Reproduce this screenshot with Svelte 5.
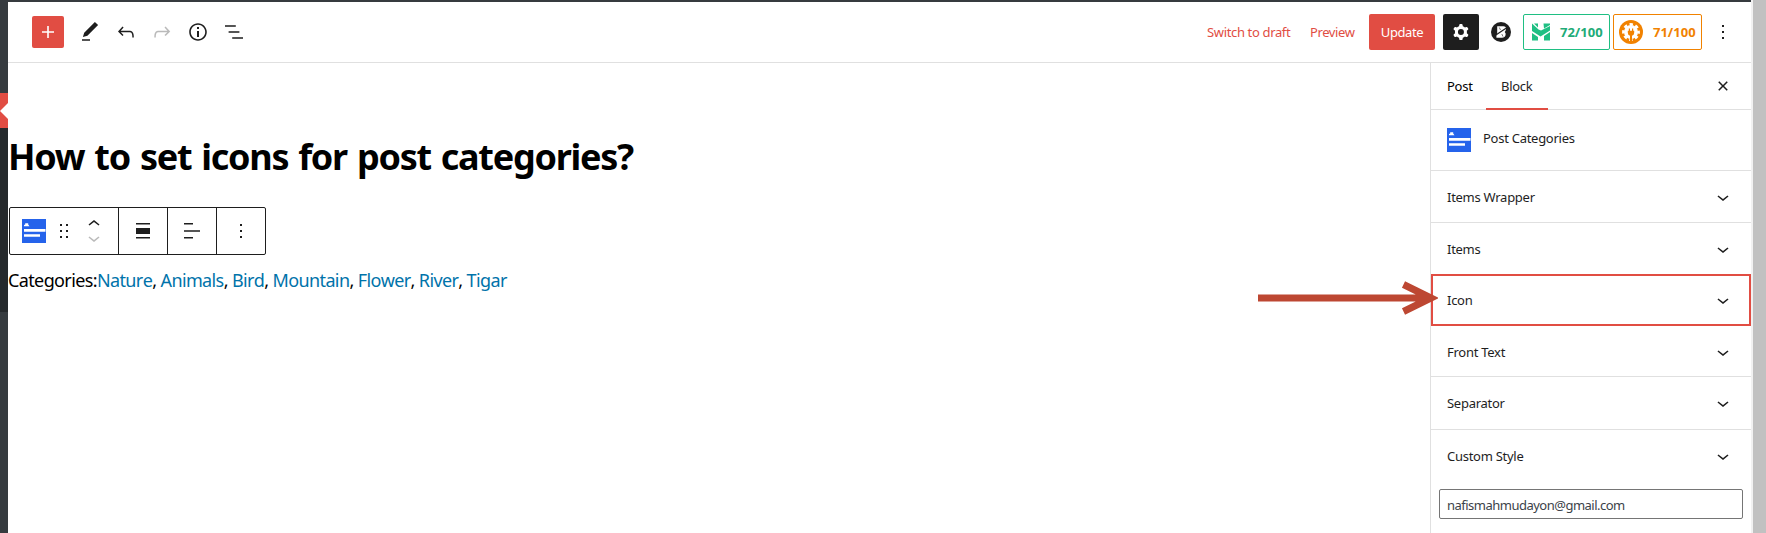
<script>
  const icons = {
    plus: 'M18 11.2h-5.2V6h-1.6v5.2H6v1.6h5.2V18h1.6v-5.2H18z',
    edit: 'M20.1 5.1L16.9 2 6.2 12.7l-1.3 4.4 4.5-1.3L20.1 5.1zM4 20.8h8v-1.5H4v1.5z',
    undo: 'M18.3 11.7c-.6-.6-1.4-.9-2.3-.9H6.7l2.9-3.3-1.1-1-4.5 5L8.5 16l1-1-2.7-2.7H16c.5 0 .9.2 1.3.5 1 1 1 3.4 1 4.5v.3h1.5v-.2c0-1.5 0-4.3-1.5-5.7z',
    redo: 'M15.6 6.5l-1.1 1 2.9 3.3H8c-.9 0-1.7.3-2.3.9-1.4 1.5-1.4 4.2-1.4 5.6v.2h1.5v-.3c0-1.1 0-3.5 1-4.5.3-.3.7-.5 1.3-.5h9.2L14.5 15l1.1 1.1 4.6-4.6-4.6-5z',
    info: 'M12 3.2c-4.8 0-8.8 3.9-8.8 8.8 0 4.8 3.9 8.8 8.8 8.8 4.8 0 8.8-3.9 8.8-8.8 0-4.8-4-8.8-8.8-8.8zm0 16c-4 0-7.2-3.3-7.2-7.2C4.8 8 8 4.8 12 4.8s7.2 3.3 7.2 7.2c0 4-3.2 7.2-7.2 7.2zM11 17h2v-6h-2v6zm0-8h2V7h-2v2z',
    list: 'M13.8 5.2H3v1.5h10.8V5.2zm-3.6 12v1.5H21v-1.5H10.2zm7.2-6H6.6v1.5h10.8v-1.5z',
    gear: 'M10.289 4.836A1 1 0 0111.275 4h1.306a1 1 0 01.987.836l.244 1.466c.787.26 1.503.679 2.108 1.218l1.393-.522a1 1 0 011.216.437l.653 1.13a1 1 0 01-.23 1.273l-1.148.944a6.025 6.025 0 010 2.435l1.149.946a1 1 0 01.23 1.272l-.653 1.13a1 1 0 01-1.216.437l-1.394-.522c-.605.54-1.32.958-2.108 1.218l-.244 1.466a1 1 0 01-.987.836h-1.306a1 1 0 01-.986-.836l-.244-1.466a5.995 5.995 0 01-2.108-1.218l-1.394.522a1 1 0 01-1.217-.436l-.653-1.131a1 1 0 01.23-1.272l1.149-.946a6.026 6.026 0 010-2.435l-1.148-.944a1 1 0 01-.23-1.272l.653-1.131a1 1 0 011.217-.437l1.393.522a5.994 5.994 0 012.108-1.218l.244-1.466zM14.929 12a3 3 0 11-6 0 3 3 0 016 0z',
    more: 'M13 19h-2v-2h2v2zm0-6h-2v-2h2v2zm0-6h-2V5h2v2z',
    drag: 'M8 7h2V5H8v2zm0 6h2v-2H8v2zm0 6h2v-2H8v2zm6-14v2h2V5h-2zm0 8h2v-2h-2v2zm0 6h2v-2h-2v2z',
    close: 'M12 13.06l3.712 3.713 1.061-1.06L13.061 12l3.712-3.712-1.06-1.06L12 10.938 8.288 7.227l-1.061 1.06L10.939 12l-3.712 3.712 1.06 1.061L12 13.061z',
    down: 'M17.5 11.6L12 16l-5.5-4.4.9-1.2L12 14l4.5-3.6 1 1.2z',
    up: 'M6.5 12.4L12 8l5.5 4.4-.9 1.2L12 10l-4.5 3.6-1-1.2z',
    alignBlock: 'M5 4h14v1.5H5zM5 9h14v6H5zM5 18h14v1.5H5z',
    alignText: 'M4 4h9v1.5H4zM4 11.2h16v1.5H4zM4 18h9v1.5H4z'
  };
  const tools = ['edit', 'undo', 'redo', 'info', 'list'];
  const categories = ['Nature', 'Animals', 'Bird', 'Mountain', 'Flower', 'River', 'Tigar'];
  const panels = [
    { name: 'Items Wrapper', height: 52 },
    { name: 'Items', height: 52 },
    { name: 'Icon', height: 52, active: true },
    { name: 'Front Text', height: 50 },
    { name: 'Separator', height: 53 },
    { name: 'Custom Style', height: 52 }
  ];
</script>

{#snippet icon(name)}
  <svg class="icon {name}" viewBox="0 0 24 24"><path fill-rule="evenodd" d={icons[name]} /></svg>
{/snippet}

{#snippet blockLogo()}
  <svg class="logo" viewBox="0 0 24 24">
    <rect width="24" height="24" fill="#2563eb" />
    <path d="M2 10h21.5v2.7H2zM2 15.2h16v2.6H2zM2 7.2V6l1.2-.6V4.3h3v1.2L7.5 7.2z" fill="#fff" />
  </svg>
{/snippet}

<div class="page">
  <div class="rail">
    <div class="current"><i></i></div>
    <div class="submenu"></div>
  </div>
  <div class="editor">
    <header>
      <button class="add">{@render icon('plus')}</button>
      <div class="tools">
        {#each tools as tool}{@render icon(tool)}{/each}
      </div>
      <div class="actions">
        <a class="draft" href="#draft">Switch to draft</a>
        <a class="preview" href="#preview">Preview</a>
        <button class="update"><span>Update</span></button>
        <button class="settings">{@render icon('gear')}</button>
        <svg class="round" viewBox="0 0 20 20">
          <circle cx="10" cy="10" r="10" fill="#1e1e1e" />
          <path d="M6.2 4.300H12.500Q15.200 4.600 15 7 14.800 9 13.700 10 15 11 14.600 13 13.900 15.800 11 15.800H5.400V13.500L6.200 11z" fill="#fff" />
          <path d="M4.500 13.300L15 6.300" stroke="#1e1e1e" stroke-width="1.200" />
          <path d="M8.300 5.500L9.500 8M10.800 12l1.200 2.500" stroke="#1e1e1e" stroke-width=".6" />
        </svg>
        <div class="score seo">
          <svg viewBox="0 0 18 18" width="18" height="18" fill="#1fbf83">
            <path d="M2 .5h4V4.500zM11.500.5H18V2L12 5.500zM0 .5L6.500 6.500 9 7.600 18 3V7.500L8.500 13.500 0 8zM0 10l6 4v3.500H0zM12 13l6-4v8.500h-6z" />
          </svg>
          <span>72/100</span>
        </div>
        <div class="score aio">
          <svg viewBox="0 0 24 24" width="24" height="24">
            <circle cx="12" cy="12" r="12" fill="#f18200" />
            <circle cx="12" cy="12" r="7" fill="#fff" />
            <circle cx="12" cy="12" r="7.6" fill="none" stroke="#fff" stroke-width="2.6" stroke-dasharray="3.4 2.569" stroke-dashoffset="1.7" />
            <path d="M8.8 10.800h6.400v2q0 2.300-2.200 2.900V21h-2v-5.300Q8.800 15.100 8.800 12.800zM9.800 8.500h1.200v2.500H9.800zM13 8.500h1.200v2.500H13z" fill="#f18200" />
          </svg>
          <span>71/100</span>
        </div>
        {@render icon('more')}
      </div>
    </header>
    <div class="body">
      <main>
        <h1>How to set icons for post categories?</h1>
        <div class="toolbar">
          <div class="group first">
            {@render blockLogo()}
            {@render icon('drag')}
            <div class="movers">{@render icon('up')}{@render icon('down')}</div>
          </div>
          <div class="group">{@render icon('alignBlock')}</div>
          <div class="group">{@render icon('alignText')}</div>
          <div class="group">{@render icon('more')}</div>
        </div>
        <p><span>Categories:</span>{#each categories as category, i}<a href="#category">{category}</a>{#if i < categories.length - 1}<b>,&nbsp;</b>{/if}{/each}</p>
        <svg class="arrow" viewBox="0 0 180 36">
          <path d="M0 18H174M145.500 4.500L173 18l-27.500 13.500" fill="none" stroke="#bd4732" stroke-width="7" />
        </svg>
      </main>
      <aside>
        <div class="tabs">
          <span class="post">Post</span>
          <span class="block">Block</span>
          {@render icon('close')}
        </div>
        <div class="card">{@render blockLogo()}<span>Post Categories</span></div>
        {#each panels as panel}
          <div class="panel" class:active={panel.active} style="height: {panel.height}px">
            <span>{panel.name}</span>{@render icon('down')}
          </div>
        {/each}
        <input value="nafismahmudayon@gmail.com" />
      </aside>
    </div>
  </div>
  <div class="scrollbar"></div>
</div>

<style>
  .page, .page * { box-sizing: border-box; }
  .page { display: flex; width: 1766px; height: 533px; overflow: hidden; background: #fff; color: #1e1e1e; font: 13px/20px "Noto Sans", sans-serif; }
  a { text-decoration: none; }
  button { border: 0; padding: 0; font: inherit; border-radius: 2px; display: flex; align-items: center; justify-content: center; }
  svg { display: block; flex: none; }
  .icon { width: 24px; height: 24px; fill: #1e1e1e; }
  .logo { width: 24px; height: 24px; }
  .rail { width: 8px; background: #363b3f; padding-top: 93px; }
  .current { height: 35px; background: #e14d43; display: flex; align-items: center; }
  .current i { border: 8px solid transparent; border-left: 0; border-right-color: #fff; }
  .submenu { height: 184px; background: #25292c; }
  .editor { width: 1743px; border-top: 2px solid #363b3f; display: flex; flex-direction: column; }
  .scrollbar { flex: 1; background: #c1c1c1; border-left: 2px solid #f1f1f1; }
  header { height: 61px; border-bottom: 1px solid #e0e0e0; display: flex; align-items: center; padding: 0 16px 0 24px; }
  .add { width: 32px; height: 32px; background: #e14d43; }
  .add .icon { fill: #fff; }
  .tools { display: flex; gap: 12px; margin-left: 14px; }
  .tools .redo { opacity: .3; }
  .actions { display: flex; align-items: center; margin-left: auto; }
  .actions a { color: #e14d43; white-space: nowrap; }
  .draft { width: 103px; letter-spacing: -.35px; }
  .preview { width: 59px; letter-spacing: -.4px; }
  .update { width: 66px; height: 36px; background: #e14d43; color: #fff; letter-spacing: -.4px; }
  .settings { width: 36px; height: 36px; background: #1e1e1e; margin: 0 12px 0 8px; }
  .settings .icon { fill: #fff; }
  .round { width: 20px; height: 20px; }
  .score { height: 36px; display: flex; align-items: center; border: 1px solid; border-radius: 2px; font-weight: 700; }
  .seo { width: 87px; margin-left: 12px; padding-left: 8px; gap: 10px; color: #1fbf83; }
  .seo span { color: #21ab77; }
  .aio { width: 89px; margin: 0 9px 0 3px; padding-left: 5px; gap: 10px; color: #f18200; }
  .body { flex: 1; display: flex; }
  main { width: 1422px; position: relative; }
  h1 { margin: 67px 0 0; font-size: 36px; line-height: 53px; font-weight: 700; color: #000; white-space: nowrap; letter-spacing: -1.27px; word-spacing: 1.9px; }
  .toolbar { display: flex; width: 257px; height: 48px; margin: 24px 0 0 1px; border: 1px solid #1e1e1e; border-radius: 2px; }
  .group { flex: none; width: 49px; display: flex; align-items: center; justify-content: center; border-right: 1px solid #1e1e1e; }
  .group:last-child { width: 48px; border: 0; }
  .group.first { width: 109px; justify-content: flex-start; padding-left: 12px; gap: 6px; }
  .movers .down { opacity: .3; margin-top: -10px; }
  p { margin: 11px 0 0; font-size: 18px; line-height: 28px; color: #000; white-space: nowrap; letter-spacing: -.62px; font-kerning: none; }
  p a { color: #0073aa; }
  p b { font-weight: 400; }
  .arrow { position: absolute; width: 180px; height: 36px; left: 1250px; top: 217px; z-index: 2; }
  aside { width: 321px; border-left: 1px solid #e0e0e0; }
  .tabs { height: 47px; border-bottom: 1px solid #e0e0e0; display: flex; align-items: center; padding-right: 16px; }
  .post { width: 55px; padding-left: 16px; color: #000; }
  .block { width: 62px; height: 47px; line-height: 47px; padding-left: 15px; border-bottom: 2px solid #e14d43; }
  .tabs .icon { margin-left: auto; }
  .card { height: 61px; border-bottom: 1px solid #e0e0e0; display: flex; align-items: center; padding-left: 16px; gap: 12px; }
  .card span { padding-bottom: 4px; }
  .tabs span, .card span, .panel span { letter-spacing: -.27px; }
  .panel { border-bottom: 1px solid #e0e0e0; display: flex; align-items: center; justify-content: space-between; padding: 0 16px; }
  .panel:nth-last-child(2) { border: 0; }
  .panel.active { border: 2px solid #e14d43; padding: 0 14px; margin: -1px 0 1px; }
  input { display: block; width: 304px; height: 30px; margin: 7px 0 0 8px; padding: 2px 7px 0; border: 1px solid #757575; border-radius: 2px; color: #3c434a; font: inherit; letter-spacing: -.51px; }
</style>
